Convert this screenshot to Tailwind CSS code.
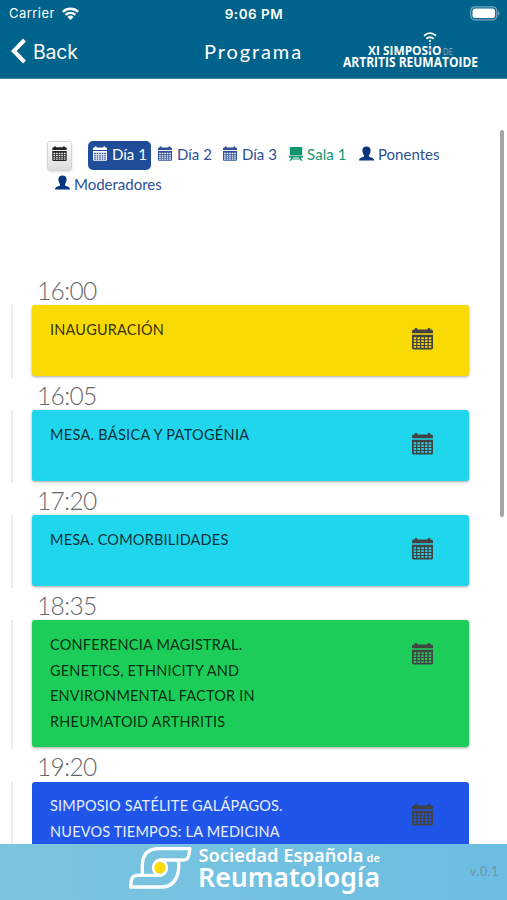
<!DOCTYPE html>
<html lang="es">
  <head>
    <meta charset="UTF-8" />
    <meta name="viewport" content="width=device-width, initial-scale=1.0" />
    <title>Programa</title>
    <script src="https://cdn.jsdelivr.net/npm/@tailwindcss/browser@4"></script>
  </head>
  <body class="h-[900px] overflow-hidden bg-white font-['Lato',sans-serif]">
    <!-- Shared icons -->
    <svg class="hidden">
      <symbol id="calendar" viewBox="0 0 22 23">
        <path fill="currentColor" d="M0 6V4q0-2 2-2h.6Q2.800.2 4.200.2T5.800 2h10.400q.2-1.800 1.600-1.800T19.400 2h.6q2 0 2 2v2z" />
        <path fill="currentColor" fill-rule="evenodd" d="M0 7.500h22V21.500q0 1.500-1.500 1.500h-19Q0 23 0 21.500zM1.800 10.300v1.900h2.600v-1.900zm3.950 0v1.900h2.600v-1.900zm3.950 0v1.900h2.600v-1.900zm3.950 0v1.900h2.600v-1.900zm3.950 0v1.900h2.600v-1.900zM1.800 13.300v1.900h2.600v-1.900zm3.950 0v1.900h2.600v-1.900zm3.950 0v1.900h2.600v-1.900zm3.950 0v1.900h2.600v-1.900zm3.950 0v1.900h2.600v-1.900zM1.800 16.300v1.900h2.600v-1.900zm3.950 0v1.900h2.600v-1.900zm3.950 0v1.900h2.600v-1.900zm3.950 0v1.900h2.600v-1.900zm3.950 0v1.900h2.600v-1.900zM1.800 19.300v1.900h2.600v-1.900zm3.950 0v1.900h2.600v-1.900zm3.950 0v1.900h2.600v-1.900zm3.950 0v1.900h2.600v-1.900zm3.950 0v1.900h2.600v-1.900z" />
      </symbol>
      <symbol id="user" viewBox="0 0 16 15">
        <path fill="currentColor" d="M8 0c2.800 0 4.400 1.700 4.400 4.200 0 2-.7 3.700-1.700 4.800v1.200c0 .6.500.9 1.700 1.300 2.600.8 3.600 1.500 3.600 3.500H0c0-2 1-2.700 3.600-3.500 1.200-.4 1.700-.7 1.700-1.300V9C4.300 7.900 3.600 6.200 3.600 4.200 3.600 1.700 5.200 0 8 0z" />
      </symbol>
      <symbol id="board" viewBox="0 0 14 14">
        <path fill="currentColor" d="M.8 0h12.400v8.500H.8zM0 9h14v1.400h-2.200l1.700 3.300h-1.700l-.7-1.300H2.900l-.7 1.300H.5l1.700-3.300H0zm4 1.400-.5 1h7l-.5-1z" />
      </symbol>
    </svg>

    <div class="flex h-full flex-col">
      <!-- Status bar + navigation -->
      <header class="h-[79px] shrink-0 border-b border-[#3f88a9] bg-[#00638c] text-white">
        <div class="grid h-7 grid-cols-3 items-center pl-[9px] pr-[7px] font-['Inter',sans-serif] text-[13px]">
          <div class="flex items-center gap-[6px]">
            <span class="tracking-[0.45px]">Carrier</span>
            <svg class="mb-[2px] h-[13px] w-[19px]" viewBox="0 0 19 14" fill="none" stroke="#fff" stroke-width="2.500">
              <path d="M1.200 5.200a12 12 0 0 1 16.600 0M4.200 8.500a7.600 7.600 0 0 1 10.600 0" />
              <path fill="#fff" stroke="none" d="M9.500 14 6.300 10.700a4.700 4.700 0 0 1 6.400 0z" />
            </svg>
          </div>
          <span class="-ml-[1px] text-center text-[13.500px] font-semibold tracking-[0.5px]">9:06 PM</span>
          <svg class="mb-[1px] h-[15px] w-[30px] justify-self-end" viewBox="0 0 30 15">
            <rect x=".8" y=".8" width="26" height="13" rx="4" fill="none" stroke="#78a9bf" stroke-width="1.200" />
            <rect x="2.500" y="2.500" width="22.600" height="9.600" rx="2.500" fill="#fff" />
            <path d="M28 5q1.500.8 1.500 2.300T28 9.600z" fill="#78a9bf" />
          </svg>
        </div>
        <div class="grid h-[48px] grid-cols-[180px_1fr_180px] items-center">
          <a href="#" class="flex items-center gap-[7px] pl-[11px]">
            <svg class="mb-[2px] h-[26px] w-[15px]" viewBox="0 0 15 26" fill="none" stroke="#fff" stroke-width="4">
              <path d="M13.500 2 2.800 13 13.500 24" />
            </svg>
            <span class="pt-[1px] font-['Inter',sans-serif] text-[19.500px] tracking-[-0.2px]">Back</span>
          </a>
          <h1 class="pb-[2px] text-center text-[20px] tracking-[1.900px]">Programa</h1>
          <svg class="ml-[13px] h-[42px] w-[142px] overflow-visible" viewBox="0 0 142 42" font-family="Open Sans, sans-serif" fill="#fff">
            <path d="M84 4.700q6-5.200 12 0M86.300 7.700q3.700-3 7.400 0" fill="none" stroke="#fff" stroke-width="1.800" />
            <circle cx="90" cy="10" r="1.100" />
            <circle cx="90" cy="13" r=".8" />
            <text x="28" y="23.500" font-size="13.200" font-weight="700" textLength="73.500" lengthAdjust="spacingAndGlyphs">XI SIMPOSIO</text>
            <path d="M90 17.500v3" stroke="#a7475a" stroke-width="1.500" />
            <text x="103" y="23.500" font-size="9" fill="#80b1c5" textLength="10" lengthAdjust="spacingAndGlyphs">DE</text>
            <text x="3" y="36" font-size="13.500" font-weight="700" textLength="135" lengthAdjust="spacingAndGlyphs">ARTRITIS REUMATOIDE</text>
          </svg>
        </div>
      </header>

      <main class="relative min-h-0 flex-1 overflow-hidden">
        <!-- Scrollbar -->
        <div class="absolute right-[3px] top-[51px] h-[387px] w-1 rounded-full bg-[#a6a6a6]"></div>

        <!-- Filters -->
        <nav class="flex h-[191px] flex-col pl-[47px] pt-[62px] text-[15px] leading-[29px] text-[#2d4f97]">
          <div class="flex h-[29px] items-center whitespace-nowrap">
            <button class="mr-[16px] flex h-[30px] w-[25px] shrink-0 items-center justify-center rounded-[3px] border border-[#d5d5d5] bg-linear-to-b from-white to-[#dcdcdc] pb-1 shadow-sm">
              <svg class="h-[15px] w-[15px] text-[#222]"><use href="#calendar" /></svg>
            </button>
            <a href="#" class="mr-[7px] flex h-[29px] w-[63px] items-center gap-[5px] rounded-[5px] bg-[#204d97] pl-[5px] text-white">
              <svg class="mb-[4px] h-[15px] w-[14px]"><use href="#calendar" /></svg><span class="pb-[2px]">Día 1</span>
            </a>
            <a href="#" class="flex w-[65px] items-center gap-[5px]">
              <svg class="mb-[4px] h-[15px] w-[14px]"><use href="#calendar" /></svg><span class="pb-[2px]">Día 2</span>
            </a>
            <a href="#" class="flex w-[66px] items-center gap-[5px]">
              <svg class="mb-[4px] h-[15px] w-[14px]"><use href="#calendar" /></svg><span class="pb-[2px]">Día 3</span>
            </a>
            <a href="#" class="flex w-[70px] items-center gap-1 text-[#149572]">
              <svg class="mb-[3px] h-[14px] w-[14px]"><use href="#board" /></svg><span class="pb-[2px] tracking-[0.1px]">Sala 1</span>
            </a>
            <a href="#" class="flex items-center gap-1">
              <svg class="mb-[4px] h-[15px] w-[15px] text-[#05367e]"><use href="#user" /></svg><span class="pb-[2px]">Ponentes</span>
            </a>
          </div>
          <a href="#" class="flex items-center gap-1 pl-2">
            <svg class="mb-[4px] h-[15px] w-[15px] text-[#05367e]"><use href="#user" /></svg><span>Moderadores</span>
          </a>
        </nav>

        <!-- Sessions -->
        <section class="text-[14.500px] leading-[25.700px] tracking-[0.2px] text-black/80">
          <div class="h-[35px] pl-[37px] pt-[4px] text-[24.500px] font-light leading-[34px] tracking-[-0.6px] text-[#666]">16:00</div>
          <div class="flex gap-[19px] pl-[11px]">
            <div class="-mb-[2px] w-[2px] bg-[#ececec]"></div>
            <article class="flex h-[71px] w-[437px] justify-between rounded-[3px] bg-[#f9da03] pl-[18px] pr-[36px] pt-[12px] shadow-[0_1px_3px_rgba(0,0,0,0.35)]">
              <p class="w-[250px] whitespace-nowrap">INAUGURACIÓN</p>
              <svg class="mt-[10px] h-[23px] w-[21px] text-[#424242]"><use href="#calendar" /></svg>
            </article>
          </div>

          <div class="h-[34px] pl-[37px] pt-[3px] text-[24.500px] font-light leading-[34px] tracking-[-0.6px] text-[#666]">16:05</div>
          <div class="flex gap-[19px] pl-[11px]">
            <div class="-mb-[2px] w-[2px] bg-[#ececec]"></div>
            <article class="flex h-[71px] w-[437px] justify-between rounded-[3px] bg-[#1fd6ed] pl-[18px] pr-[36px] pt-[12px] shadow-[0_1px_3px_rgba(0,0,0,0.35)]">
              <p class="w-[250px] whitespace-nowrap tracking-[0.300px]">MESA. BÁSICA Y PATOGÉNIA</p>
              <svg class="mt-[10px] h-[23px] w-[21px] text-[#424242]"><use href="#calendar" /></svg>
            </article>
          </div>

          <div class="h-[34px] pl-[37px] pt-[3px] text-[24.500px] font-light leading-[34px] tracking-[-0.6px] text-[#666]">17:20</div>
          <div class="flex gap-[19px] pl-[11px]">
            <div class="-mb-[2px] w-[2px] bg-[#ececec]"></div>
            <article class="flex h-[71px] w-[437px] justify-between rounded-[3px] bg-[#1fd6ed] pl-[18px] pr-[36px] pt-[12px] shadow-[0_1px_3px_rgba(0,0,0,0.35)]">
              <p class="w-[250px] whitespace-nowrap">MESA. COMORBILIDADES</p>
              <svg class="mt-[10px] h-[23px] w-[21px] text-[#424242]"><use href="#calendar" /></svg>
            </article>
          </div>

          <div class="h-[34px] pl-[37px] pt-[3px] text-[24.500px] font-light leading-[34px] tracking-[-0.6px] text-[#666]">18:35</div>
          <div class="flex gap-[19px] pl-[11px]">
            <div class="-mb-[2px] w-[2px] bg-[#ececec]"></div>
            <article class="flex h-[127px] w-[437px] justify-between rounded-[3px] bg-[#1dcd59] pl-[18px] pr-[36px] pt-[12px] shadow-[0_1px_3px_rgba(0,0,0,0.35)]">
              <p class="w-[250px] whitespace-nowrap">CONFERENCIA MAGISTRAL.<br />GENETICS, ETHNICITY AND<br />ENVIRONMENTAL FACTOR IN<br />RHEUMATOID ARTHRITIS</p>
              <svg class="mt-[10px] h-[23px] w-[21px] text-[#424242]"><use href="#calendar" /></svg>
            </article>
          </div>

          <div class="h-[35px] pl-[37px] pt-[3px] text-[24.500px] font-light leading-[34px] tracking-[-0.6px] text-[#666]">19:20</div>
          <div class="flex gap-[19px] pl-[11px]">
            <div class="w-[2px] bg-[#ececec]"></div>
            <article class="flex h-[127px] w-[437px] justify-between rounded-[3px] bg-[#1f55e8] pl-[18px] pr-[36px] pt-[11px]">
              <p class="w-[250px] whitespace-nowrap text-white/90">SIMPOSIO SATÉLITE GALÁPAGOS.<br />NUEVOS TIEMPOS: LA MEDICINA</p>
              <svg class="mt-[10px] h-[23px] w-[21px] text-[#424242]"><use href="#calendar" /></svg>
            </article>
          </div>
        </section>
      </main>

      <!-- Footer -->
      <footer class="flex h-[56px] shrink-0 items-start justify-between bg-linear-to-r from-[#7cc5df] to-[#6bbde2] pl-[127px] pr-[8px]">
        <svg class="h-[56px] w-[258px] overflow-visible" viewBox="0 0 258 56" fill="#fff">
          <g fill="none" stroke="#fff" stroke-width="3.300" stroke-linejoin="round">
            <path d="M15.300 31V22Q15.300 4.700 32 4.700H63L61.800 11.500Q61 16 56 16H33A7.800 7.800 0 0 0 33 31.400" />
            <path d="M51 16Q52 18 51.700 24 50 43 34 43H3.500L4.500 36Q5.500 31.400 10.500 31.400H33A7.800 7.800 0 0 0 33 16" />
          </g>
          <circle cx="33" cy="23.700" r="5.700" fill="#ffdc08" />
          <g font-family="Noto Sans, sans-serif" font-weight="600">
            <text x="71.500" y="18" font-size="17.800" textLength="165" lengthAdjust="spacingAndGlyphs">Sociedad Española</text>
            <text x="239.500" y="18" font-size="11.500" textLength="13.500" lengthAdjust="spacingAndGlyphs">de</text>
            <text x="71" y="42.800" font-size="27" textLength="182" lengthAdjust="spacingAndGlyphs">Reumatología</text>
          </g>
        </svg>
        <span class="mt-[19px] text-[12.500px] tracking-[0.5px] text-[#6e95a5]">v.0.1</span>
      </footer>
    </div>
  </body>
</html>
